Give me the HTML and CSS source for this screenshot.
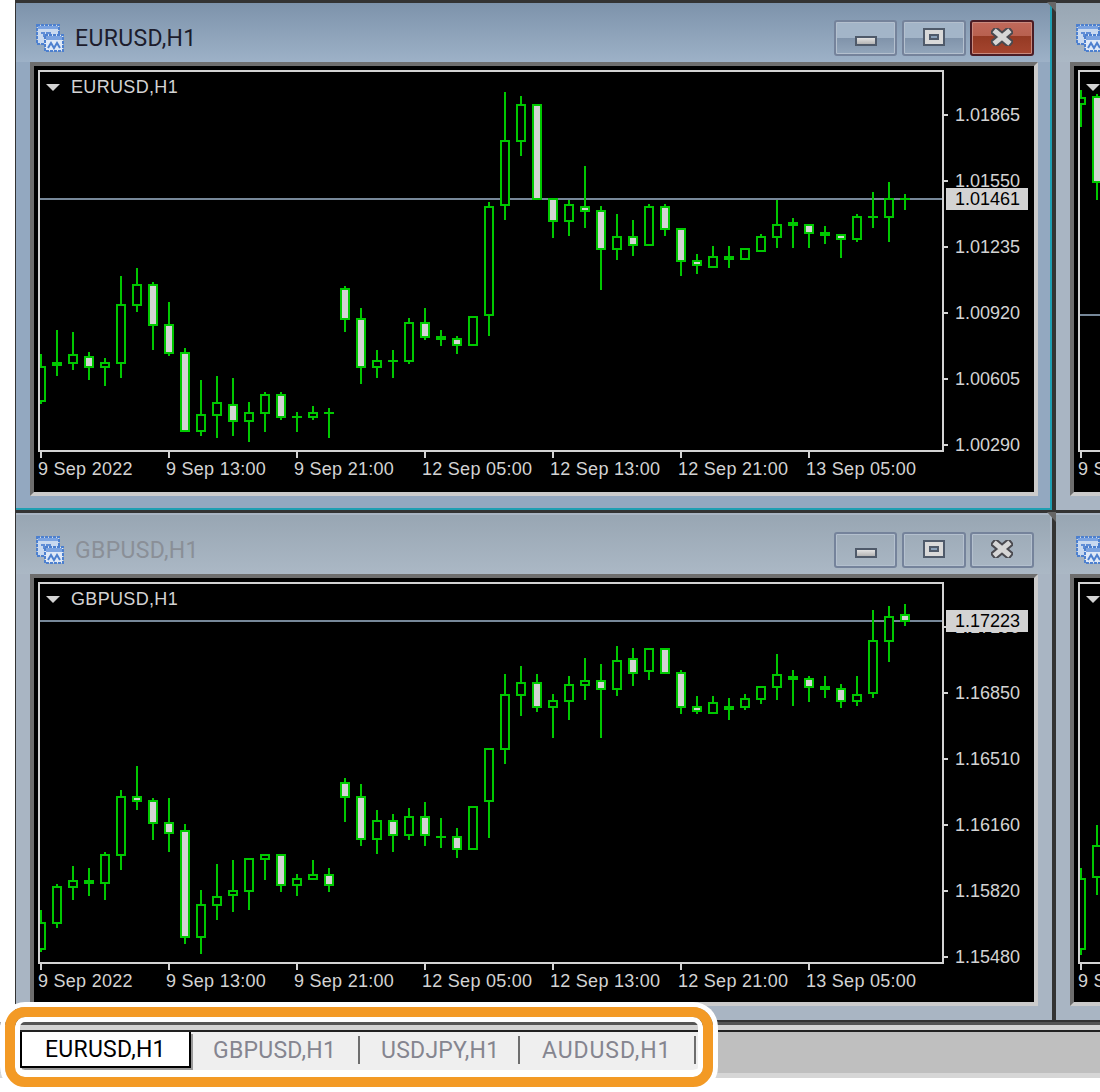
FILE: index.html
```html
<!DOCTYPE html>
<html lang="en">
<head>
    <meta charset="UTF-8">
    <title>MT4 tiled charts</title>
    <link rel="stylesheet" href="styles.css">
</head>
<body>
    <div class="workspace" id="workspace"></div>

    <div class="tabbar">
        <div class="tabbar-strip"></div>
        <div class="tabs">
            <div class="tab active">EURUSD,H1</div>
            <div class="tab">GBPUSD,H1</div>
            <div class="tab">USDJPY,H1</div>
            <div class="tab">AUDUSD,H1</div>
        </div>
    </div>
    <div class="highlight"></div>

    <script src="chart.js"></script>
</body>
</html>
```
FILE: styles.css
```css
* {
    box-sizing: border-box;
}
html, body {
    margin: 0;
    height: 1092px;
    overflow: hidden;
    background: #fff;
}
body {
    position: relative;
    font-family: "Liberation Sans", Arial, sans-serif;
}
.workspace {
    display: grid;
    grid-template-columns: 1041px 44px;
    grid-template-rows: 512px 510px;
    margin-left: 15px;
    overflow: hidden;
    background: #333;
}

/* child windows */
.win {
    position: relative;
    display: flex;
    width: 1041px;
    border-style: solid;
    border-color: #333;
    border-width: 3px 4px 2px 1px;
}
.win.lower {
    border-top-width: 1px;
}
.win.side {
    width: 1040px;
    border-left-width: 0;
}
.win-inner {
    flex: 1;
    display: flex;
    flex-direction: column;
    padding: 0 12px 12px 14px;
    background: #a9b5c3;
    border-right: 2px solid #a9b5c3;
    border-bottom: 2px solid #a9b5c3;
}
.win.lower .win-inner {
    padding-top: 2px;
}
.win.active .win-inner {
    background: #93a8c0;
    border-color: #1f9fb2;
}
.win::after {
    content: "";
    position: absolute;
    top: -1px;
    right: -13px;
    border-style: solid;
    border-width: 10px 9px 0;
    border-color: #666 transparent transparent;
}
.win.side::after {
    display: none;
}

.title {
    flex: none;
    display: flex;
    align-items: center;
    height: 59px;
    margin: 0 -12px 0 -14px;
    padding: 11px 16px 0 20px;
    background: linear-gradient(#98a6b3, #abb8c5);
    color: #8a8f97;
    font-family: Roboto, Arial, sans-serif;
    font-size: 23px;
    letter-spacing: 0.33px;
}
.win.active .title {
    background: linear-gradient(#7d93ab, #9db1c7);
    color: #1c1c2c;
}
.title-icon {
    flex: none;
    width: 28px;
    height: 28px;
    margin-right: 11px;
}
.title-text {
    flex: 1;
    margin-top: 1px;
}
.buttons {
    display: flex;
    gap: 4px;
}
.btn {
    display: flex;
    align-items: center;
    justify-content: center;
    width: 64px;
    height: 36px;
    border: 2px solid #75839b;
    border-radius: 3px;
    box-shadow: inset 0 0 0 1px #b4c0ce;
}
.btn:first-child {
    width: 63px;
    margin-right: 1px;
}
.win.active .btn {
    background: linear-gradient(#a3b5c8 0, #a3b5c8 50%, #8093aa 50%, #93a6bb 100%);
}
.win.active .btn.close {
    background: linear-gradient(#c0695a 0, #b8604f 45%, #953a24 45%, #a5452f 100%);
    border-color: #4b1c24;
    box-shadow: inset 0 0 0 1px #c98a7e;
}
.glyph-min {
    width: 22px;
    height: 10px;
    margin-top: 6px;
    border: 2px solid #4f5a6a;
    background: linear-gradient(#e2e2e2, #b4b4b4);
}
.glyph-max {
    display: flex;
    align-items: center;
    justify-content: center;
    width: 22px;
    height: 18px;
    margin-top: -2px;
    border: 2px solid #4f5a6a;
    background: #d9d9d9;
}
.glyph-max span {
    width: 10px;
    height: 6px;
    border: 2px solid #4f5a6a;
    background: #8aa0b8;
}
.glyph-close {
    width: 22px;
    height: 18px;
    margin-top: -2px;
}

/* chart frame */
.chart {
    flex: 1;
    width: 1008px;
    padding: 4px 0 0 4px;
    background: #000;
    border-style: solid;
    border-width: 4px;
    border-color: #6e6e6e #cbcbcb #cbcbcb #6e6e6e;
    color: #d3d3d3;
    font-size: 18px;
    line-height: 20px;
}
.chart-main {
    display: flex;
}
.plot {
    position: relative;
    flex: none;
    width: 906px;
    height: 382px;
    border: 2px solid #d3d3d3;
}
.plot svg {
    display: block;
}
.chart-label {
    position: absolute;
    top: 5px;
    left: 6px;
    display: flex;
    align-items: center;
    gap: 11px;
    letter-spacing: 0.33px;
}
.arrow {
    border-style: solid;
    border-width: 7px 7px 0;
    border-color: #d3d3d3 transparent transparent;
}
.price-axis {
    position: relative;
    flex: 1;
}
.price {
    position: absolute;
    left: 0;
    padding-left: 11px;
}
.price::before {
    content: "";
    position: absolute;
    top: 9px;
    left: 0;
    width: 4px;
    height: 2px;
    background: #d3d3d3;
}
.price.current {
    left: 2px;
    width: 82px;
    height: 22px;
    padding-left: 9px;
    line-height: 22px;
    background: #d3d3d3;
    color: #000;
}
.price.current::before {
    display: none;
}
.time-axis {
    display: flex;
}
.time {
    flex: none;
    width: 128px;
    white-space: nowrap;
    letter-spacing: 0.27px;
}
.time::before {
    content: "";
    display: block;
    width: 2px;
    height: 6px;
    margin: 0 0 1px 2px;
    background: #d3d3d3;
}

/* tab strip at the bottom */
.tabbar {
    height: 56px;
    background: #bfbfbf;
    border-top: 3px solid #555;
    border-bottom: 5px solid #d6d6d6;
}
.tabbar-strip {
    height: 7px;
    background: #d4d4d4;
    border-bottom: 2px solid #222;
}
.tabs {
    display: flex;
    width: 678px;
    height: 38px;
    margin-left: 20px;
    background: #efefef;
    color: #85858f;
    font-family: Roboto, Arial, sans-serif;
    font-size: 23px;
    letter-spacing: 0.25px;
}
.tab {
    position: relative;
    flex: none;
    width: 169px;
    padding: 5px 0 0 22px;
    line-height: 28px;
}
.tab:nth-child(3) {
    width: 160px;
    padding-left: 21px;
}
.tab:nth-child(4) {
    width: 176px;
    letter-spacing: 0.9px;
}
.tab::after {
    content: "";
    position: absolute;
    top: 4px;
    right: 0;
    width: 2px;
    height: 28px;
    background: #6e6e6e;
}
.tab.active {
    width: 171px;
    height: 36px;
    padding: 4px 0 0 23px;
    border: solid #000;
    border-width: 0 2px 2px;
    background: #fff;
    box-shadow: 2px 2px 0 #999;
    color: #000;
}
.tab.active::after {
    display: none;
}
.highlight {
    position: absolute;
    left: 5px;
    top: 1007px;
    width: 708px;
    height: 80px;
    border: 10px solid #f39a25;
    border-radius: 20px;
    box-shadow: 0 0 0 5px #fff, inset 0 0 0 5px #fff, inset 0 -7px 0 #fff;
}
```
FILE: chart.js
```js
// candles: x centre, wick top, body top, body bottom, wick bottom, filled (page pixels)
const eurusd = [
    [41,354,366,402,404,0],[57,330,362,366,376,1],[73,332,354,364,370,0],[89,352,356,368,380,1],
    [105,358,362,368,386,0],[121,276,304,364,378,0],[137,268,284,306,312,0],[153,282,284,326,350,1],
    [169,302,324,354,356,1],[185,348,352,432,432,1],[201,380,414,432,436,0],[217,376,402,416,438,0],
    [233,378,404,422,436,1],[249,402,412,422,442,0],[265,392,394,414,432,0],[281,392,394,418,420,1],
    [297,412,416,418,432,1],[313,406,412,418,420,0],[329,408,412,414,438,1],[345,286,288,320,332,1],
    [361,308,318,368,384,1],[377,350,360,368,378,0],[393,350,360,362,378,1],[409,318,322,362,364,0],
    [425,308,322,338,340,1],[441,330,336,340,346,1],[457,336,338,346,354,1],[473,316,316,346,346,0],
    [489,202,206,316,336,0],[505,92,140,206,220,0],[521,96,104,142,156,0],[537,104,104,200,200,1],
    [553,198,198,222,238,1],[569,200,204,222,236,0],[585,166,206,212,228,1],[601,206,210,250,290,1],
    [617,214,236,250,260,0],[633,220,236,246,256,1],[649,204,206,246,246,0],[665,204,206,230,236,1],
    [681,228,228,262,276,1],[697,254,260,266,274,1],[713,246,256,268,268,0],[729,246,256,260,268,1],
    [745,248,248,260,260,0],[761,234,236,252,252,0],[777,200,224,238,248,0],[793,218,222,226,248,1],
    [809,224,224,234,248,1],[825,226,232,236,244,1],[841,234,234,240,258,1],[857,214,216,240,242,0],
    [873,192,216,218,228,1],[889,182,198,218,242,0],[905,194,198,200,210,1]
];
const gbpusd = [
    [41,910,922,950,952,0],[57,884,886,924,928,0],[73,866,880,888,900,0],[89,868,880,884,896,1],
    [105,852,854,884,900,0],[121,790,796,856,870,0],[137,766,796,802,810,1],[153,798,800,824,840,1],
    [169,798,822,834,852,1],[185,824,830,938,944,1],[201,890,904,938,954,0],[217,864,896,906,920,0],
    [233,860,890,896,912,0],[249,858,858,892,910,0],[265,854,854,860,880,0],[281,854,854,886,892,1],
    [297,874,878,886,896,0],[313,860,874,880,880,0],[329,868,874,886,892,1],[345,778,782,798,822,1],
    [361,784,796,840,846,1],[377,810,820,840,854,0],[393,814,820,836,852,1],[409,808,816,836,840,0],
    [425,802,816,836,846,1],[441,818,836,838,848,1],[457,828,836,850,858,1],[473,806,806,850,850,0],
    [489,748,748,802,838,0],[505,674,694,750,764,0],[521,666,682,696,716,0],[537,674,682,708,712,1],
    [553,694,700,708,738,0],[569,676,684,702,720,0],[585,658,680,686,700,0],[601,664,680,690,738,1],
    [617,646,660,690,696,0],[633,648,658,674,686,1],[649,648,648,672,680,0],[665,648,648,674,674,1],
    [681,670,672,708,714,1],[697,696,706,712,714,1],[713,696,702,714,714,0],[729,698,706,710,720,1],
    [745,694,698,708,710,0],[761,686,686,700,704,0],[777,654,674,688,700,0],[793,670,676,680,706,1],
    [809,676,678,688,702,1],[825,676,686,690,698,1],[841,684,688,702,708,1],[857,676,694,702,706,0],
    [873,610,640,694,698,0],[889,606,616,642,662,0],[905,604,614,622,626,1]
];

const dates = ["9 Sep 2022", "9 Sep 13:00", "9 Sep 21:00", "12 Sep 05:00", "12 Sep 13:00", "12 Sep 21:00", "13 Sep 05:00"];

const windows = [
    { name: "EURUSD,H1", active: true, top: 72, line: 199, bid: "1.01461", candles: eurusd,
      prices: [[115,"1.01865"],[181,"1.01550"],[247,"1.01235"],[313,"1.00920"],[379,"1.00605"],[445,"1.00290"]] },
    { name: "USDJPY,H1", side: true, top: 72, line: 315, candles: [[41,90,97,105,127,0],[57,94,96,183,200,1]], prices: [] },
    { name: "GBPUSD,H1", lower: true, top: 584, line: 621, bid: "1.17223", candles: gbpusd,
      prices: [[627,"1.17190"],[693,"1.16850"],[759,"1.16510"],[825,"1.16160"],[891,"1.15820"],[957,"1.15480"]] },
    { name: "AUDUSD,H1", side: true, lower: true, top: 584, candles: [[41,868,878,950,955,0],[57,825,845,878,895,0]], prices: [] }
];

const GREEN = "#00c800";
const FILL = "#d3d3d3";

function rect(x, y, w, h, color) {
    return `<rect x="${x}" y="${y}" width="${w}" height="${h}" fill="${color}"/>`;
}

function candleSvg(win) {
    let out = "";
    if (win.line) out += rect(0, win.line - win.top - 1, 902, 2, "#778899");
    win.candles.forEach(([x, wickTop, bodyTop, bodyBottom, wickBottom, filled]) => {
        let cx = x - 40;
        let top = bodyTop - win.top;
        let h = bodyBottom - bodyTop;
        out += rect(cx - 1, wickTop - win.top, 2, wickBottom - wickTop, GREEN);
        out += rect(cx - 5, top, 10, h, GREEN);
        if (h > 4) out += rect(cx - 3, top + 2, 6, h - 4, filled ? FILL : "#000");
    });
    return `<svg width="902" height="378" shape-rendering="crispEdges">${out}</svg>`;
}

function pricesHtml(win) {
    let out = win.prices.map(([y, text]) =>
        `<div class="price" style="top:${y - win.top - 8}px">${text}</div>`).join("");
    if (win.bid) {
        out += `<div class="price current" style="top:${win.line - win.top - 9}px">${win.bid}</div>`;
    }
    return out;
}

const iconSvg = `<svg class="title-icon" viewBox="0 0 28 28" shape-rendering="crispEdges">
    <rect x="1" y="1" width="22" height="19" fill="#c9d9ef" stroke="#4d80cf" stroke-width="2" stroke-dasharray="3 1"/>
    <rect x="2" y="2" width="20" height="3" fill="#7ba3e0"/>
    <path d="M5 9h3v3h3v-3h3v3" fill="none" stroke="#5f8dd6" stroke-width="2"/>
    <rect x="9" y="11" width="18" height="16" fill="#dfe9f7" stroke="#4d80cf" stroke-width="2" stroke-dasharray="3 1"/>
    <rect x="10" y="12" width="16" height="4" fill="#7ba3e0"/>
    <path d="M12 24l3-5 3 5 3-5 3 5" fill="none" stroke="#4d80cf" stroke-width="2" shape-rendering="auto"/>
</svg>`;

const closeSvg = `<svg class="glyph-close" viewBox="0 0 22 18">
    <path d="M5 4l12 10M17 4L5 14" stroke="#4a4a50" stroke-width="9" stroke-linecap="square"/>
    <path d="M5 4l12 10M17 4L5 14" stroke="#d6d6d6" stroke-width="5" stroke-linecap="square"/>
</svg>`;

function windowHtml(win) {
    let classes = ["win"];
    if (win.active) classes.push("active");
    if (win.lower) classes.push("lower");
    if (win.side) classes.push("side");
    return `<div class="${classes.join(" ")}"><div class="win-inner">
        <div class="title">
            ${iconSvg}
            <span class="title-text">${win.name}</span>
            <div class="buttons">
                <div class="btn"><div class="glyph-min"></div></div>
                <div class="btn"><div class="glyph-max"><span></span></div></div>
                <div class="btn close">${closeSvg}</div>
            </div>
        </div>
        <div class="chart">
            <div class="chart-main">
                <div class="plot">
                    ${candleSvg(win)}
                    <div class="chart-label"><span class="arrow"></span>${win.name}</div>
                </div>
                <div class="price-axis">${pricesHtml(win)}</div>
            </div>
            <div class="time-axis">${dates.map(d => `<div class="time">${d}</div>`).join("")}</div>
        </div>
    </div></div>`;
}

document.getElementById("workspace").innerHTML = windows.map(windowHtml).join("");
```
